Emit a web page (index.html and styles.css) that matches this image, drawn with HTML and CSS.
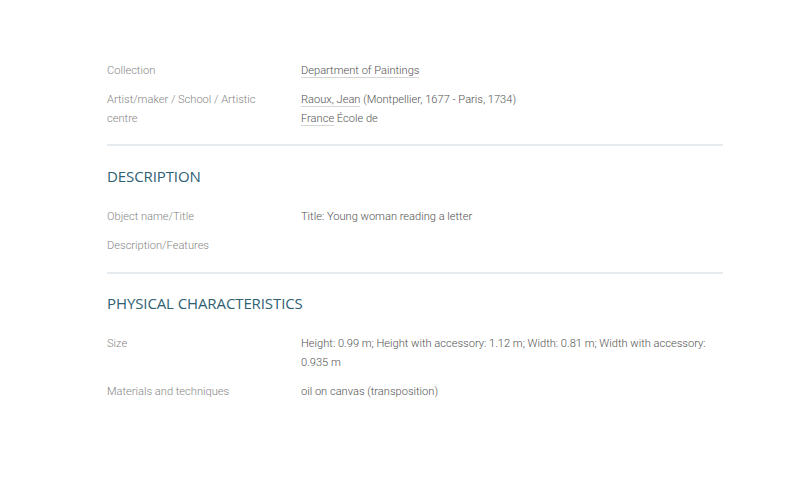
FILE: index.html
```html
<!DOCTYPE html>
<html lang="en">
<head>
<meta charset="utf-8">
<title>Young woman reading a letter</title>
<link rel="stylesheet" href="styles.css">
</head>
<body>
<main class="record">
  <section class="fields fields-first">
    <div class="row">
      <div class="label">Collection</div>
      <div class="value"><a class="link" href="#">Department of Paintings</a></div>
    </div>
    <div class="row">
      <div class="label">Artist/maker / School / Artistic centre</div>
      <div class="value"><a class="link" href="#">Raoux, Jean</a> (Montpellier, 1677 - Paris, 1734)<br><a class="link" href="#">France</a> École de</div>
    </div>
  </section>
  <hr class="divider">
  <section class="fields">
    <h2 class="heading">DESCRIPTION</h2>
    <div class="row">
      <div class="label">Object name/Title</div>
      <div class="value">Title: Young woman reading a letter</div>
    </div>
    <div class="row">
      <div class="label">Description/Features</div>
      <div class="value"></div>
    </div>
  </section>
  <hr class="divider">
  <section class="fields">
    <h2 class="heading">PHYSICAL CHARACTERISTICS</h2>
    <div class="row">
      <div class="label">Size</div>
      <div class="value">Height: 0.99 m; Height with accessory: 1.12 m; Width: 0.81 m; Width with accessory: 0.935 m</div>
    </div>
    <div class="row">
      <div class="label">Materials and techniques</div>
      <div class="value">oil on canvas (transposition)</div>
    </div>
  </section>
</main>
</body>
</html>
```
FILE: styles.css
```css
* { box-sizing: border-box; }
html, body { margin: 0; padding: 0; background: #fff; }
body {
  font-family: Roboto, "Liberation Sans", sans-serif;
  font-weight: 300;
  font-size: 11.1px;
  line-height: 19px;
  color: #555;
}
.record {
  margin-left: 107px;
  width: 616px;
}
.fields {
  display: flex;
  flex-direction: column;
  gap: 10px;
  padding-bottom: 17px;
}
.fields-first {
  padding-top: 61px;
  padding-bottom: 16px;
}
.row {
  display: grid;
  grid-template-columns: 194px 1fr;
}
.label {
  color: #858585;
  padding-right: 30px;
}
.value { color: #525252; min-height: 19px; }
.link {
  color: #525252;
  text-decoration: none;
  border-bottom: 1px solid #d6d6d6;
}
.divider {
  margin: 0;
  border: 0;
  border-top: 2px solid #e5ebef;
}
.heading {
  margin: 19.5px 0 11px;
  font-family: "Open Sans", sans-serif;
  font-weight: 400;
  font-size: 15px;
  line-height: 20px;
  letter-spacing: -0.1px;
  color: #2e6173;
}
```
